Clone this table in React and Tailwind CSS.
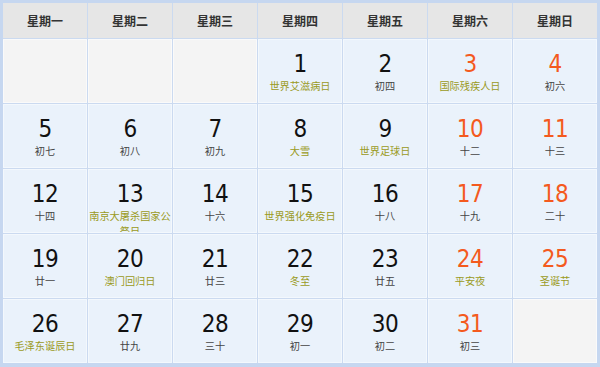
import React from "react";

const heads = ["星期一", "星期二", "星期三", "星期四", "星期五", "星期六", "星期日"];

// [day, sub, type] type: 'l' lunar, 'f' festival
const cells = [
  null, null, null,
  [1, "世界艾滋病日", "f"], [2, "初四", "l"], [3, "国际残疾人日", "f"], [4, "初六", "l"],
  [5, "初七", "l"], [6, "初八", "l"], [7, "初九", "l"], [8, "大雪", "f"], [9, "世界足球日", "f"], [10, "十二", "l"], [11, "十三", "l"],
  [12, "十四", "l"], [13, "南京大屠杀国家公祭日", "f"], [14, "十六", "l"], [15, "世界强化免疫日", "f"], [16, "十八", "l"], [17, "十九", "l"], [18, "二十", "l"],
  [19, "廿一", "l"], [20, "澳门回归日", "f"], [21, "廿三", "l"], [22, "冬至", "f"], [23, "廿五", "l"], [24, "平安夜", "f"], [25, "圣诞节", "f"],
  [26, "毛泽东诞辰日", "f"], [27, "廿九", "l"], [28, "三十", "l"], [29, "初一", "l"], [30, "初二", "l"], [31, "初三", "l"], null,
];

export default function App() {
  return (
    <div className="w-[600px] h-[367px] bg-[#c6d7f0] pt-[3px] pl-[3px] pr-[3px] pb-[4px] overflow-hidden">
      <div className="grid grid-cols-[repeat(7,84px)] grid-rows-[35px_repeat(5,64px)] gap-px bg-[#cbdaf0]">
        {heads.map((h) => (
          <div
            key={h}
            className="bg-[#e6e6e6] flex items-center justify-center text-[12px] font-bold text-[#333] [font-family:'Noto_Sans_CJK_SC',sans-serif]"
          >
            {h}
          </div>
        ))}
        {cells.map((c, i) => {
          const col = i % 7;
          const weekend = col >= 5;
          if (!c) {
            return <div key={i} className="bg-[#f4f4f4] border border-[#fafafa]" />;
          }
          const [d, sub, t] = c;
          return (
            <div
              key={i}
              className="bg-[#eaf2fb] border border-[#f3f8fd] overflow-hidden flex flex-col items-center pt-[10px] px-0"
            >
              <div
                className={
                  "text-[24px] leading-[28px] tracking-[-0.5px] [font-family:'DejaVu_Sans_Condensed','DejaVu_Sans',sans-serif] " +
                  (weekend ? "text-[#f45a1e]" : "text-[#111]")
                }
              >
                {d}
              </div>
              <div
                className={
                  "text-[10.2px] leading-[15px] text-center w-full [font-family:'Noto_Sans_CJK_SC',sans-serif] " +
                  (t === "f" ? "text-[#9a9a1c]" : "text-[#444]")
                }
              >
                {sub}
              </div>
            </div>
          );
        })}
      </div>
    </div>
  );
}
